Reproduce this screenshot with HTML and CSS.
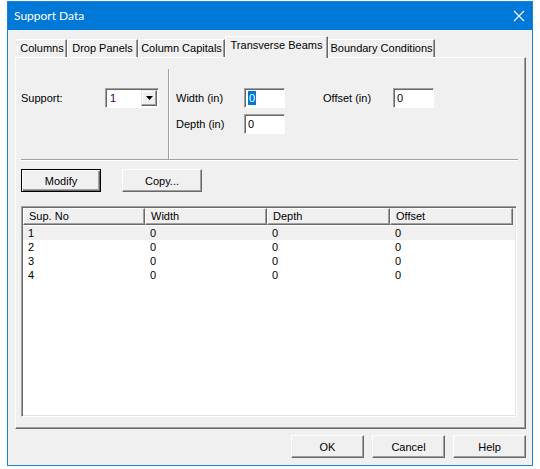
FILE: index.html
```html
<!DOCTYPE html>
<html>
<head>
<meta charset="utf-8">
<link rel="stylesheet" href="styles.css">
</head>
<body>
<div class="window">
  <div class="titlebar">
    <span class="title">Support Data</span>
    <svg class="close" width="12" height="12" viewBox="0 0 12 12"><path d="M1 1 L11 11 M11 1 L1 11" stroke="#fff" stroke-width="1.1" fill="none"/></svg>
  </div>
  <div class="client">
    <div class="tabs">
      <div class="tab w1">Columns</div>
      <div class="tab w2">Drop Panels</div>
      <div class="tab w3">Column Capitals</div>
      <div class="tab sel w4">Transverse Beams</div>
      <div class="tab w5">Boundary Conditions</div>
    </div>
    <div class="panel">
      <div class="top">
        <div class="left">
          <span class="lbl-support">Support:</span>
          <div class="combo">
            <span class="combo-text">1</span>
            <span class="combo-btn"><svg width="7" height="4" viewBox="0 0 7 4"><path d="M0 0 H7 L3.5 4 Z" fill="#000"/></svg></span>
          </div>
        </div>
        <div class="vsep"></div>
        <div class="fields">
          <span class="lbl">Width (in)</span>
          <div class="input"><span class="hl">0</span></div>
          <span></span>
          <span class="lbl">Offset (in)</span>
          <div class="input">0</div>
          <span class="lbl">Depth (in)</span>
          <div class="input">0</div>
        </div>
      </div>
      <div class="hsep"></div>
      <div class="actions">
        <div class="btn default">Modify</div>
        <div class="btn">Copy...</div>
      </div>
      <div class="list">
        <div class="lhead">
          <div class="hc c1">Sup. No</div>
          <div class="hc c2">Width</div>
          <div class="hc c3">Depth</div>
          <div class="hc c4">Offset</div>
        </div>
        <div class="row first"><span class="c1">1</span><span class="c2">0</span><span class="c3">0</span><span class="c4">0</span></div>
        <div class="row"><span class="c1">2</span><span class="c2">0</span><span class="c3">0</span><span class="c4">0</span></div>
        <div class="row"><span class="c1">3</span><span class="c2">0</span><span class="c3">0</span><span class="c4">0</span></div>
        <div class="row"><span class="c1">4</span><span class="c2">0</span><span class="c3">0</span><span class="c4">0</span></div>
      </div>
    </div>
    <div class="footer">
      <div class="btn fb">OK</div>
      <div class="btn fb">Cancel</div>
      <div class="btn fb">Help</div>
    </div>
  </div>
</div>
</body>
</html>
```

FILE: styles.css
```css
* { box-sizing: border-box; }
body {
  margin: 0;
  background: #ffffff;
  font-family: "Liberation Sans", Arial, sans-serif;
  font-size: 11px;
  color: #000;
}
.window {
  margin: 1px 0 0 7px;
  width: 526px;
  height: 465px;
  border: 1px solid #1883d7;
  display: flex;
  flex-direction: column;
  background: #f0f0f0;
}
.titlebar {
  height: 28px;
  background: #0078d7;
  display: flex;
  align-items: center;
  justify-content: space-between;
  padding: 0 7px 1px 6px;
  flex: none;
}
.title {
  color: #fff;
  font-family: Lato, "Liberation Sans", sans-serif;
  font-size: 12px;
}
.client {
  flex: 1;
  padding: 7px 0 0 7px;
}
.tabs {
  display: flex;
  align-items: flex-end;
  height: 20px;
  padding-left: 2px;
  position: relative;
  z-index: 1;
}
.tab {
  height: 18px;
  border-top: 1px solid #fff;
  border-left: 1px solid #fff;
  border-right: 1px solid #696969;
  box-shadow: inset -1px 0 0 #a0a0a0;
  display: flex;
  align-items: center;
  justify-content: center;
  white-space: nowrap;
  padding-bottom: 2px;
}
.tab.sel {
  height: 22px;
  margin-bottom: -1px;
  background: #f0f0f0;
  padding-bottom: 6px;
}
.w1 { width: 50px; }
.w2 { width: 71px; }
.w3 { width: 87px; }
.w4 { width: 103px; }
.w5 { width: 107px; }
.panel {
  width: 511px;
  height: 372px;
  border-top: 1px solid #fff;
  border-left: 1px solid #fff;
  border-right: 1px solid #696969;
  border-bottom: 1px solid #696969;
  box-shadow: inset -1px -1px 0 #a0a0a0;
}
.top {
  display: flex;
  margin: 11px 0 0 5px;
  height: 90px;
}
.left {
  width: 147px;
  padding-top: 19px;
  display: flex;
  align-items: flex-start;
}
.lbl-support {
  width: 84px;
  line-height: 20px;
}
.combo {
  width: 54px;
  height: 20px;
  background: #fff;
  border-top: 1px solid #a0a0a0;
  border-left: 1px solid #a0a0a0;
  border-right: 1px solid #fff;
  border-bottom: 1px solid #fff;
  box-shadow: inset 1px 1px 0 #696969;
  display: flex;
  align-items: center;
  justify-content: space-between;
  padding: 1px 1px 1px 4px;
}
.combo-text { color: #3a0050; }
.combo-btn {
  width: 16px;
  height: 16px;
  background: #f0f0f0;
  border-top: 1px solid #e3e3e3;
  border-left: 1px solid #e3e3e3;
  border-right: 1px solid #696969;
  border-bottom: 1px solid #696969;
  box-shadow: inset -1px -1px 0 #a0a0a0, inset 1px 1px 0 #fff;
  display: flex;
  align-items: center;
  justify-content: center;
}
.vsep {
  width: 2px;
  border-left: 1px solid #a0a0a0;
  border-right: 1px solid #fff;
}
.fields {
  padding: 19px 0 0 6px;
  display: grid;
  grid-template-columns: 68px 41px 38px 70px 41px;
  grid-auto-rows: 20px;
  row-gap: 6px;
  align-content: start;
}
.lbl { line-height: 20px; }
.input {
  background: #fff;
  border-top: 1px solid #a0a0a0;
  border-left: 1px solid #a0a0a0;
  border-right: 1px solid #fff;
  border-bottom: 1px solid #fff;
  box-shadow: inset 1px 1px 0 #696969;
  padding: 0 0 0 3px;
  line-height: 18px;
}
.hl {
  background: #0078d7;
  color: #fff;
  display: inline-block;
  line-height: 14px;
  padding: 0 1px;
}
.hsep {
  margin-left: 5px;
  width: 497px;
  border-top: 1px solid #a0a0a0;
  border-bottom: 1px solid #fff;
}
.actions {
  display: flex;
  gap: 21px;
  margin: 8px 0 0 5px;
}
.btn {
  width: 80px;
  height: 23px;
  background: #f0f0f0;
  border-top: 1px solid #fff;
  border-left: 1px solid #fff;
  border-right: 1px solid #696969;
  border-bottom: 1px solid #696969;
  box-shadow: inset -1px -1px 0 #a0a0a0;
  display: flex;
  align-items: center;
  justify-content: center;
}
.btn.default {
  border: 1px solid #000;
  box-shadow: inset 1px 1px 0 #fff, inset -1px -1px 0 #696969, inset -2px -2px 0 #a0a0a0;
}
.list {
  margin: 14px 0 0 5px;
  width: 496px;
  height: 211px;
  background: #fff;
  border-top: 1px solid #a0a0a0;
  border-left: 1px solid #a0a0a0;
  border-right: 1px solid #fff;
  border-bottom: 1px solid #fff;
  box-shadow: inset 1px 1px 0 #696969, inset -1px -1px 0 #e3e3e3;
  padding: 1px;
}
.lhead {
  display: flex;
  height: 17px;
  background: #f0f0f0;
}
.hc {
  height: 17px;
  border-top: 1px solid #fff;
  border-left: 1px solid #fff;
  border-right: 1px solid #696969;
  border-bottom: 1px solid #696969;
  box-shadow: inset -1px -1px 0 #a0a0a0;
  padding-left: 5px;
  line-height: 15px;
  white-space: nowrap;
}
.c1 { width: 122px; }
.c2 { width: 122px; }
.c3 { width: 123px; }
.c4 { width: 123px; }
.row {
  display: flex;
  height: 14px;
  line-height: 14px;
}
.row span { padding-left: 5px; }
.row.first { margin-top: 1px; background: #f0f0f0; }
.footer {
  display: flex;
  justify-content: flex-end;
  gap: 8px;
  width: 511px;
  margin-top: 6px;
}
.fb { width: 73px; }
```
